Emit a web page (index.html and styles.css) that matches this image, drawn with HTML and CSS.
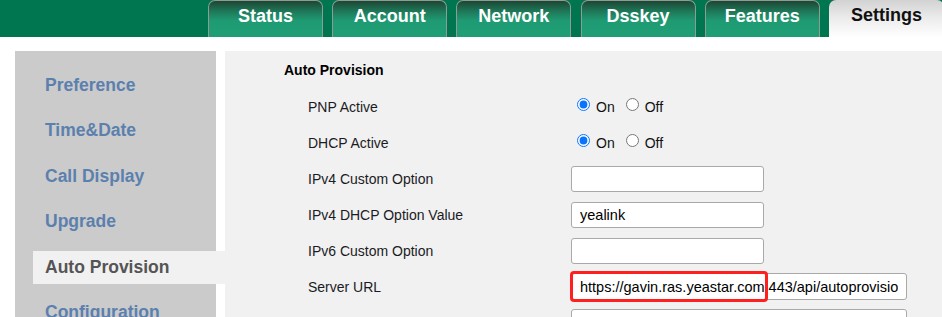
FILE: index.html
```html
<!DOCTYPE html>
<html lang="en">
<head>
  <meta charset="UTF-8" />
  <meta name="viewport" content="width=device-width, initial-scale=1" />
  <title>Settings - Auto Provision</title>
  <link rel="stylesheet" href="styles.css">
</head>
<body>
  <header class="topbar">
    <nav class="tabs">
      <a class="tab">Status</a>
      <a class="tab">Account</a>
      <a class="tab">Network</a>
      <a class="tab">Dsskey</a>
      <a class="tab">Features</a>
      <a class="tab active">Settings</a>
    </nav>
  </header>

  <div class="main">
    <aside class="sidebar">
      <a class="side-item">Preference</a>
      <a class="side-item">Time&amp;Date</a>
      <a class="side-item">Call Display</a>
      <a class="side-item">Upgrade</a>
      <a class="side-item active">Auto Provision</a>
      <a class="side-item">Configuration</a>
    </aside>

    <section class="content">
      <h2 class="section-title">Auto Provision</h2>

      <div class="row">
        <span class="label">PNP Active</span>
        <div class="field">
          <input type="radio" name="pnp" checked /><span class="opt">On</span>
          <input type="radio" name="pnp" /><span class="opt">Off</span>
        </div>
      </div>

      <div class="row">
        <span class="label">DHCP Active</span>
        <div class="field">
          <input type="radio" name="dhcp" checked /><span class="opt">On</span>
          <input type="radio" name="dhcp" /><span class="opt">Off</span>
        </div>
      </div>

      <div class="row">
        <span class="label">IPv4 Custom Option</span>
        <div class="field"><input class="text-input" type="text" value="" /></div>
      </div>

      <div class="row">
        <span class="label">IPv4 DHCP Option Value</span>
        <div class="field"><input class="text-input" type="text" value="yealink" /></div>
      </div>

      <div class="row">
        <span class="label">IPv6 Custom Option</span>
        <div class="field"><input class="text-input" type="text" value="" /></div>
      </div>

      <div class="row">
        <span class="label">Server URL</span>
        <div class="field url-field">
          <input class="text-input wide" type="text" value="https://gavin.ras.yeastar.com:443/api/autoprovision" />
          <span class="highlight"></span>
        </div>
      </div>

      <div class="row">
        <span class="label"></span>
        <div class="field"><input class="text-input wide" type="text" value="" /></div>
      </div>
    </section>
  </div>
</body>
</html>
```

FILE: styles.css
```css
html, body {
  overflow: hidden;
}

body {
  margin: 0;
  background: #ffffff;
  font-family: 'Liberation Sans', Arial, sans-serif;
  color: #1a1a1a;
}

.topbar {
  height: 37px;
  background: #007650;
}

.tabs {
  display: flex;
  gap: 9.2px;
  padding-left: 208px;
  height: 37px;
}

.tab {
  flex: 0 0 115px;
  box-sizing: border-box;
  height: 37px;
  border: 1px solid #8e9c94;
  border-bottom: none;
  border-radius: 7px 7px 0 0;
  background: linear-gradient(to bottom, #1d4634 0%, #1e7a5a 30%, #1f9b73 55%, #1f9e76 100%);
  color: #ffffff;
  font-weight: bold;
  font-size: 18px;
  line-height: 31px;
  text-align: center;
}

.tab.active {
  border: none;
  background: linear-gradient(to bottom, #d2d2d2 0%, #ececec 50%, #ffffff 100%);
  color: #111111;
}

.main {
  display: flex;
  padding: 14px 0 0 15px;
}

.sidebar {
  flex: 0 0 201px;
  min-height: 400px;
  padding-top: 17.5px;
  background: #cbcbcb;
}

.side-item {
  display: block;
  height: 33px;
  line-height: 33px;
  margin: 0 -9px 12.5px 18px;
  padding-left: 12px;
  font-weight: bold;
  font-size: 17.5px;
  color: #5b80ae;
}

.side-item.active {
  background: #f1f1f1;
  color: #555555;
}

.content {
  flex: 1;
  margin-left: 9px;
  min-height: 400px;
  padding: 9px 0 0 59px;
  background: #f1f1f1;
}

.section-title {
  margin: 0 0 8.5px;
  font-size: 14px;
  line-height: 20px;
  font-weight: bold;
  color: #000000;
}

.row {
  display: flex;
  align-items: center;
  height: 36px;
  padding-left: 24px;
}

.label {
  flex: 0 0 263px;
  font-size: 14px;
  color: #1b1b24;
}

.field {
  display: flex;
  align-items: center;
  font-size: 14px;
  color: #111111;
}

.field input[type="radio"] {
  width: 13px;
  height: 13px;
  margin: -4px 6px 0 6px;
  accent-color: #0a74ff;
}

.opt {
  margin-right: 5px;
}

.text-input {
  box-sizing: border-box;
  width: 193px;
  height: 26px;
  padding: 0 8px;
  border: 1px solid #a9a9a9;
  border-radius: 3px;
  background: #ffffff;
  font-family: 'Liberation Sans', Arial, sans-serif;
  font-size: 14.5px;
  color: #000000;
}

.text-input.wide {
  width: 336px;
  height: 27px;
}

.url-field {
  position: relative;
}

.highlight {
  position: absolute;
  left: -1px;
  top: -2px;
  width: 198px;
  height: 31px;
  box-sizing: border-box;
  border: 3px solid #ff1f1f;
  border-radius: 4px;
  pointer-events: none;
}
```
